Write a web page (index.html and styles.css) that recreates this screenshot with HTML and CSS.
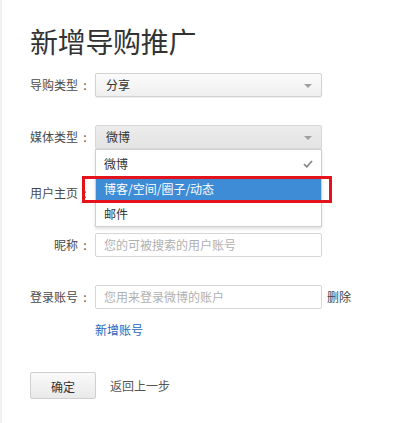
FILE: index.html
```html
<!DOCTYPE html>
<html lang="zh-CN">
<head>
<meta charset="utf-8">
<title>新增导购推广</title>
<link rel="stylesheet" href="styles.css">
</head>
<body>
<div class="page">
  <h1 class="title">新增导购推广</h1>
  <div class="row row-first">
    <span class="label">导购类型<span class="colon">:</span></span>
    <div class="select"><span>分享</span><i class="arrow"></i></div>
  </div>
  <div class="row">
    <span class="label">媒体类型<span class="colon">:</span></span>
    <div class="select select-open"><span>微博</span><i class="arrow"></i>
      <ul class="menu">
        <li class="item">微博<svg class="check" width="10" height="8" viewBox="0 0 10 8"><path d="M1 4.2 L3.8 6.8 L9 1" fill="none" stroke="#8a8a8a" stroke-width="1.8"/></svg></li>
        <li class="item item-active">博客/空间/圈子/动态</li>
        <li class="item">邮件</li>
        <li class="mark"></li>
      </ul>
    </div>
  </div>
  <div class="row row-home">
    <span class="label">用户主页<span class="colon">:</span></span>
    <div class="input"></div>
  </div>
  <div class="row">
    <span class="label">昵称<span class="colon">:</span></span>
    <div class="input"><span class="ph">您的可被搜索的用户账号</span></div>
  </div>
  <div class="row">
    <span class="label">登录账号<span class="colon">:</span></span>
    <div class="input"><span class="ph">您用来登录微博的账户</span></div>
    <a class="del">删除</a>
  </div>
  <div class="add"><a class="link">新增账号</a></div>
  <div class="actions">
    <button class="btn">确定</button>
    <a class="back">返回上一步</a>
  </div>
</div>
</body>
</html>
```
FILE: styles.css
```css
* { box-sizing: border-box; }
body {
  margin: 0;
  background: #fff;
  font-family: "Noto Sans CJK SC", "Noto Sans", sans-serif;
  font-size: 12px;
  color: #333;
}
.page {
  min-height: 423px;
  border-left: 2px solid #f1f1f1;
  padding-left: 28px;
  padding-top: 21px;
}
.title {
  margin: 0;
  font-size: 28px;
  line-height: 40px;
  font-weight: normal;
  color: #333;
  letter-spacing: -0.3px;
}
.row {
  display: flex;
  align-items: center;
  height: 24px;
  margin-top: 28px;
}
.row-first { margin-top: 12px; }
.row-home { margin-top: 32px; }
.label {
  width: 60px;
  margin-right: 5px;
  text-align: right;
  color: #4a4a4a;
  line-height: 24px;
  white-space: nowrap;
}
.colon {
  display: inline-block;
  width: 12px;
  text-align: center;
  padding-left: 2px;
}
.select {
  position: relative;
  width: 227px;
  height: 24px;
  border: 1px solid #d2d2d2;
  border-radius: 2px;
  background: linear-gradient(#fbfbfb, #efefef);
  box-shadow: 0 1px 1px rgba(0,0,0,0.08);
  padding-left: 10px;
  line-height: 22px;
  color: #333;
}
.select-open {
  background: linear-gradient(#ececec, #e4e4e4);
  border-color: #d8d8d8;
}
.arrow {
  position: absolute;
  right: 9px;
  top: 10px;
  width: 0;
  height: 0;
  border-left: 4px solid transparent;
  border-right: 4px solid transparent;
  border-top: 4px solid #a0a0a0;
}
.menu {
  position: absolute;
  left: -1px;
  top: 23px;
  width: 227px;
  margin: 0;
  padding: 0;
  list-style: none;
  background: #fff;
  border: 1px solid #cfcfcf;
  box-shadow: 0 2px 3px rgba(0,0,0,0.12);
  z-index: 2;
}
.item {
  position: relative;
  height: 25px;
  line-height: 25px;
  padding-left: 8px;
  color: #333;
}
.item:first-child { height: 27px; line-height: 27px; }
.item-active {
  background: #3e8bd6;
  color: #fff;
  height: 24px;
  line-height: 24px;
}
.check {
  position: absolute;
  right: 8px;
  top: 10px;
}
.mark {
  position: absolute;
  left: -14px;
  top: 26px;
  width: 250px;
  height: 27px;
  border: 3px solid #e3121b;
}
.input {
  width: 227px;
  height: 24px;
  border: 1px solid #d6d6d6;
  border-radius: 2px;
  background: #fff;
  padding-left: 8px;
  line-height: 22px;
}
.ph { color: #b0b0b0; }
.del {
  margin-left: 5px;
  color: #444;
  line-height: 24px;
}
.add {
  margin-top: 11px;
  padding-left: 65px;
  line-height: 20px;
}
.link { color: #2a65bf; }
.actions {
  display: flex;
  align-items: center;
  margin-top: 32px;
}
.btn {
  width: 66px;
  height: 27px;
  border: 1px solid #cfcfcf;
  border-radius: 2px;
  background: linear-gradient(#fafafa, #e9e9e9);
  font-family: inherit;
  font-size: 12px;
  color: #333;
  padding: 0;
  padding-top: 2px;
}
.back {
  margin-left: 14px;
  color: #555;
  line-height: 20px;
}
```
